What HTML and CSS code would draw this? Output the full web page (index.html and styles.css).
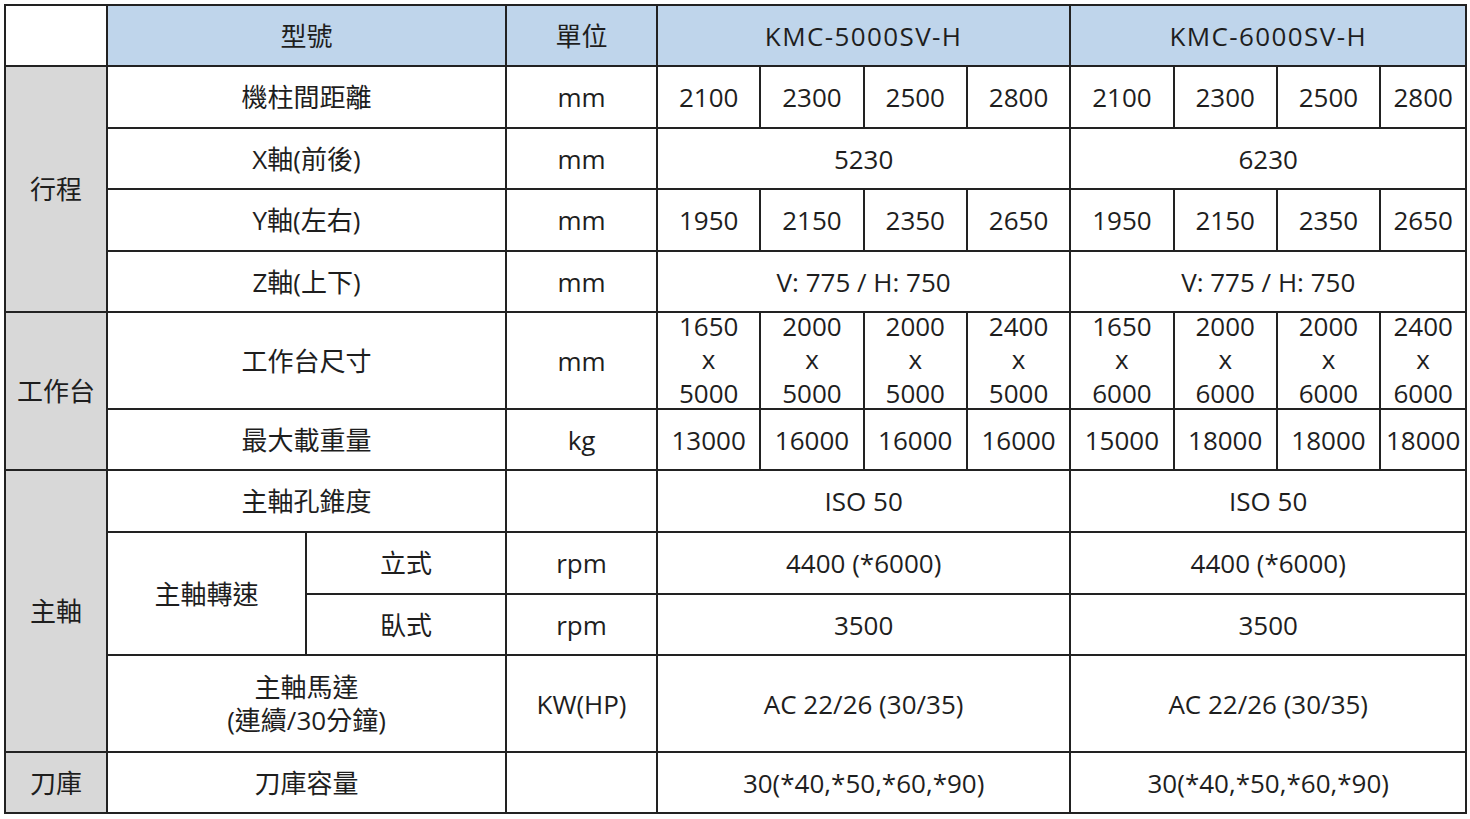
FILE: index.html
```html
<!DOCTYPE html>
<html lang="zh-Hant">
<head>
<meta charset="utf-8">
<title>KMC規格表</title>
<link rel="stylesheet" href="styles.css">
</head>
<body>
<table class="spec">
  <colgroup>
    <col class="c-cat"><col class="c-item"><col class="c-sub"><col class="c-unit">
    <col class="c-v"><col class="c-v"><col class="c-v"><col class="c-v">
    <col class="c-v"><col class="c-v"><col class="c-v"><col class="c-last">
  </colgroup>
  <tr class="h61">
    <td class="blank"></td>
    <th colspan="2">型號</th>
    <th>單位</th>
    <th colspan="4" class="model">KMC-5000SV-H</th>
    <th colspan="4" class="model">KMC-6000SV-H</th>
  </tr>
  <tr class="h62">
    <td class="cat" rowspan="4">行程</td>
    <td colspan="2">機柱間距離</td>
    <td>mm</td>
    <td>2100</td><td>2300</td><td>2500</td><td>2800</td>
    <td>2100</td><td>2300</td><td>2500</td><td>2800</td>
  </tr>
  <tr class="h61">
    <td colspan="2">X軸(前後)</td>
    <td>mm</td>
    <td colspan="4">5230</td>
    <td colspan="4">6230</td>
  </tr>
  <tr class="h62">
    <td colspan="2">Y軸(左右)</td>
    <td>mm</td>
    <td>1950</td><td>2150</td><td>2350</td><td>2650</td>
    <td>1950</td><td>2150</td><td>2350</td><td>2650</td>
  </tr>
  <tr class="h61">
    <td colspan="2">Z軸(上下)</td>
    <td>mm</td>
    <td colspan="4">V: 775 / H: 750</td>
    <td colspan="4">V: 775 / H: 750</td>
  </tr>
  <tr class="h97">
    <td class="cat" rowspan="2">工作台</td>
    <td colspan="2">工作台尺寸</td>
    <td>mm</td>
    <td class="tall"><div class="stack">1650<br>x<br>5000</div></td>
    <td class="tall"><div class="stack">2000<br>x<br>5000</div></td>
    <td class="tall"><div class="stack">2000<br>x<br>5000</div></td>
    <td class="tall"><div class="stack">2400<br>x<br>5000</div></td>
    <td class="tall"><div class="stack">1650<br>x<br>6000</div></td>
    <td class="tall"><div class="stack">2000<br>x<br>6000</div></td>
    <td class="tall"><div class="stack">2000<br>x<br>6000</div></td>
    <td class="tall"><div class="stack">2400<br>x<br>6000</div></td>
  </tr>
  <tr class="h61">
    <td colspan="2">最大載重量</td>
    <td>kg</td>
    <td>13000</td><td>16000</td><td>16000</td><td>16000</td>
    <td>15000</td><td>18000</td><td>18000</td><td>18000</td>
  </tr>
  <tr class="h62">
    <td class="cat" rowspan="4">主軸</td>
    <td colspan="2">主軸孔錐度</td>
    <td></td>
    <td colspan="4">ISO 50</td>
    <td colspan="4">ISO 50</td>
  </tr>
  <tr class="h62">
    <td rowspan="2">主軸轉速</td>
    <td>立式</td>
    <td>rpm</td>
    <td colspan="4">4400 (*6000)</td>
    <td colspan="4">4400 (*6000)</td>
  </tr>
  <tr class="h61">
    <td>臥式</td>
    <td>rpm</td>
    <td colspan="4">3500</td>
    <td colspan="4">3500</td>
  </tr>
  <tr class="h97">
    <td colspan="2" class="two">主軸馬達<br>(連續/30分鐘)</td>
    <td>KW(HP)</td>
    <td colspan="4">AC 22/26 (30/35)</td>
    <td colspan="4">AC 22/26 (30/35)</td>
  </tr>
  <tr class="h61">
    <td class="cat">刀庫</td>
    <td colspan="2">刀庫容量</td>
    <td></td>
    <td colspan="4">30(*40,*50,*60,*90)</td>
    <td colspan="4">30(*40,*50,*60,*90)</td>
  </tr>
</table>
</body>
</html>
```
FILE: styles.css
```css
html, body {
  margin: 0;
  padding: 0;
  background: #ffffff;
}

body {
  padding: 4px 0 0 4px;
}

.spec {
  border-collapse: collapse;
  table-layout: fixed;
  width: 1461px;
  font-family: "Open Sans", "Noto Sans CJK TC", sans-serif;
  font-size: 26px;
  color: #1e1e1e;
}

.c-cat { width: 102px; }
.c-item { width: 199px; }
.c-sub { width: 200px; }
.c-unit { width: 151px; }
.c-v { width: 103.3px; }
.c-last { width: 86px; }

.spec th,
.spec td {
  border: 2px solid #222222;
  padding: 0;
  text-align: center;
  vertical-align: middle;
  font-weight: normal;
  line-height: 32px;
  white-space: nowrap;
  overflow: hidden;
}

.spec th {
  background: #bfd5eb;
}

.spec th.model {
  letter-spacing: 1.4px;
}

.spec td.cat {
  background: #d8d8d8;
}

.spec td.blank {
  background: #ffffff;
}

.spec td.tall {
  overflow: visible;
}

.stack {
  line-height: 33.5px;
  margin: -4px 0 -3px;
}

.spec td.two {
  line-height: 33px;
}

.h61 { height: 61px; }
.h62 { height: 62px; }
.h97 { height: 97px; }
```
